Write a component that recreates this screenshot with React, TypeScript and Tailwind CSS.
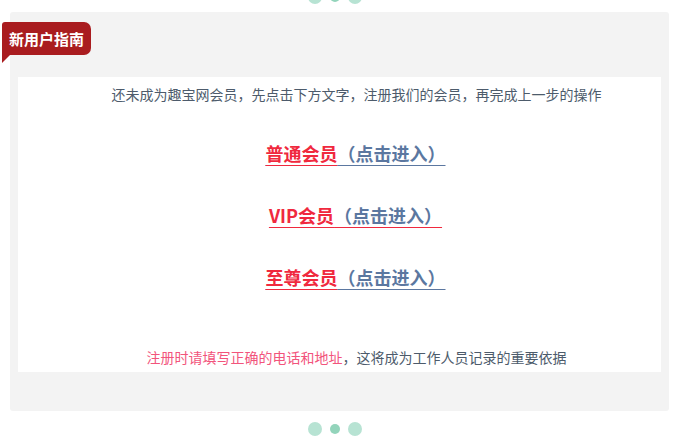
const links = [
  { name: '普通会员', split: true },
  { name: 'VIP会员', split: false },
  { name: '至尊会员', split: true },
];

function Dots({ className }: { className: string }) {
  return (
    <div className={`flex items-center justify-center gap-[8px] ${className}`}>
      <span className="w-[14px] h-[14px] rounded-full bg-[#b7e3d3]" />
      <span className="w-[10px] h-[10px] rounded-full bg-[#93d4bb]" />
      <span className="w-[14px] h-[14px] rounded-full bg-[#b7e3d3]" />
    </div>
  );
}

export default function App() {
  return (
    <div
      className="relative w-[685px] h-[444px] bg-white overflow-hidden"
      style={{ fontFamily: '"Microsoft YaHei", "Noto Sans CJK SC", sans-serif' }}
    >
      <Dots className="absolute left-0 right-0 top-[-10px] pr-[15px]" />

      <div className="absolute left-[10px] top-[12px] w-[659px] h-[399px] rounded-[3px] bg-[#f3f3f3] px-[8px] pt-[65px]">
        <div className="bg-white h-[295px] flex flex-col items-center">
          <p className="mt-[7px] pl-[34px] text-[14px] leading-[20px] text-[#4d5b6b]">
            还未成为趣宝网会员，先点击下方文字，注册我们的会员，再完成上一步的操作
          </p>

          <div className="mt-[36px] pl-[32px] flex flex-col items-center gap-[35px]">
            {links.map((l) => (
              <a
                key={l.name}
                href="#"
                className={`text-[18px] leading-[27px] font-bold ${
                  l.split ? 'underline decoration-[#5b77a0]' : 'underline decoration-[#f0293e]'
                } underline-offset-[4px]`}
              >
                <span className="text-[#f0293e] underline decoration-[#f0293e]">{l.name}</span>
                <span className="text-[#5b77a0]">（点击进入）</span>
              </a>
            ))}
          </div>

          <p className="mt-[56px] pl-[34px] text-[14px] leading-[20px] text-[#4d5b6b]">
            <span className="text-[#f2547c]">注册时请填写正确的电话和地址</span>，这将成为工作人员记录的重要依据
          </p>
        </div>
      </div>

      <div className="absolute left-[2px] top-[22px]">
        <div className="h-[33px] pl-[7px] pr-[7px] rounded-tr-[7px] rounded-br-[7px] rounded-tl-[3px] bg-[#a91c1f] text-white text-[15px] font-bold leading-[33px]">
          新用户指南
        </div>
        <div className="w-0 h-0 border-l-[8px] border-l-[#a91c1f] border-b-[8px] border-b-transparent" />
      </div>

      <Dots className="absolute left-0 right-0 top-[422px] pr-[15px]" />
    </div>
  );
}
